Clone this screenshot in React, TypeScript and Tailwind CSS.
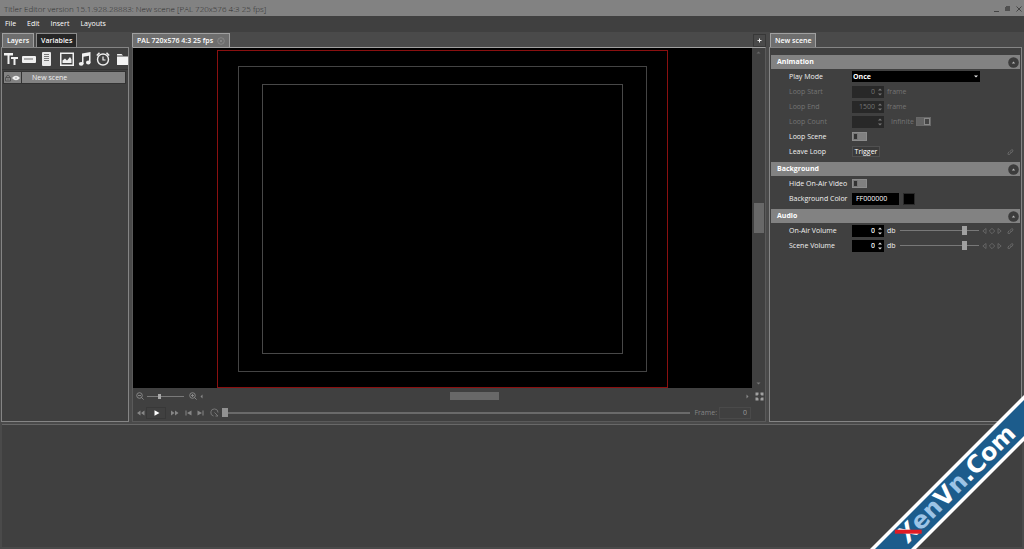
import { useState, type ReactNode } from 'react';

const MENU = ['File', 'Edit', 'Insert', 'Layouts'];

const TOOLS: { name: string; width: string; icon: ReactNode }[] = [
  {
    name: 'Text',
    width: 'w-[18px]',
    icon: (
      <svg width="14" height="14" viewBox="0 0 14 14" fill="#f0f0f0">
        <path d="M0 1h9v2.500H5.500V12H3.500V3.500H0z" />
        <path d="M7 5h7v2h-2.500v6H9.500V7H7z" />
      </svg>
    ),
  },
  {
    name: 'Text line',
    width: 'w-[18px]',
    icon: (
      <svg width="14" height="14" viewBox="0 0 14 14">
        <rect x="0" y="4" width="14" height="7" rx="1" fill="#f0f0f0" />
        <path d="M2 7h9" stroke="#888" strokeWidth="1.300" />
      </svg>
    ),
  },
  {
    name: 'Text page',
    width: 'w-[20px]',
    icon: (
      <svg width="14" height="14" viewBox="0 0 14 14">
        <rect x="2" y="0" width="9" height="14" rx="1" fill="#e8e8e8" />
        <path d="M4 2.500h5M4 4.500h5M4 6.500h5M4 8.500h5" stroke="#777" strokeWidth="1" />
      </svg>
    ),
  },
  {
    name: 'Image',
    width: 'w-[18px]',
    icon: (
      <svg width="14" height="14" viewBox="0 0 14 14">
        <rect x="0.750" y="1.250" width="12.500" height="12" fill="#444" stroke="#f0f0f0" strokeWidth="1.500" />
        <path d="M2.500 11V8.500L5 6.500l2 2L10 5l1.500 2.500V11z" fill="#f0f0f0" />
      </svg>
    ),
  },
  {
    name: 'Audio',
    width: 'w-[18px]',
    icon: (
      <svg width="14" height="14" viewBox="0 0 14 14" fill="#f0f0f0">
        <path d="M4 1.500L12.500 0v10.500h-1.500V3.800L5.500 4.800V12H4z" />
        <ellipse cx="3.200" cy="11.800" rx="2.400" ry="1.900" />
        <ellipse cx="10.300" cy="10.500" rx="2.300" ry="1.900" />
      </svg>
    ),
  },
  {
    name: 'Clock',
    width: 'w-[21px]',
    icon: (
      <svg width="14" height="14" viewBox="0 0 14 14" fill="none" stroke="#f0f0f0">
        <circle cx="7" cy="7.500" r="5.500" strokeWidth="1.400" />
        <path d="M7 4.500v3.500h2.500" strokeWidth="1.200" />
        <path d="M.8 3.500L3.500 .8M13.200 3.500L10.500 .8" strokeWidth="1.500" />
      </svg>
    ),
  },
  {
    name: 'Folder',
    width: 'w-[14px]',
    icon: (
      <svg width="14" height="14" viewBox="0 0 14 14" fill="#f4f4f4">
        <path d="M0 3.500V2.500Q0 2 .5 2H4.500L6 3.500z" />
        <path d="M0 4.500h14V13H.5Q0 13 0 12.500z" />
      </svg>
    ),
  },
];

function Tab({ label, active, closable }: { label: string; active?: boolean; closable?: boolean }) {
  return (
    <button
      className={`flex h-[14px] items-center gap-1 whitespace-nowrap border border-b-0 px-1 font-semibold text-white ${
        active ? 'border-[#a0a0a0] bg-[#6e6e6e]' : 'border-[#8c8c8c] bg-[#262626]'
      }`}
    >
      {label}
      {closable && (
        <svg width="8" height="8" viewBox="0 0 8 8" fill="none" stroke="#929292" strokeWidth="0.700">
          <circle cx="4" cy="4" r="3.300" />
          <path d="M2.800 2.800l2.400 2.400M5.200 2.800L2.800 5.200" />
        </svg>
      )}
    </button>
  );
}

function Section({ title, children }: { title: string; children: ReactNode }) {
  const [open, setOpen] = useState(true);
  return (
    <section className="pb-[3px]">
      <h2 className="flex h-[14px] items-center justify-between bg-[#828282] pl-[6px] pr-px font-bold text-white">
        {title}
        <button aria-label={`Toggle ${title}`} onClick={() => setOpen(!open)}>
          <svg width="11" height="11" viewBox="0 0 11 11">
            <circle cx="5.500" cy="5.500" r="5.300" fill="#3c3c3c" />
            <path d="M3.800 6.400L5.500 4.600l1.700 1.800z" fill="#b5b5b5" />
          </svg>
        </button>
      </h2>
      {open && children}
    </section>
  );
}

function Row({ id, label, dim, children }: { id: string; label: string; dim?: boolean; children: ReactNode }) {
  return (
    <div className={`flex h-[15px] items-center pl-[18px] pr-[6px] ${dim ? 'text-[#747474]' : 'text-[#f0f0f0]'}`}>
      <label htmlFor={id} className="w-[63px] shrink-0 whitespace-nowrap">
        {label}
      </label>
      {children}
    </div>
  );
}

function Spin({ id, value, dim }: { id: string; value: string; dim?: boolean }) {
  return (
    <div className={`flex h-[12px] w-[32px] shrink-0 items-center ${dim ? 'bg-[#282828]' : 'bg-black font-semibold'}`}>
      <input id={id} defaultValue={value} disabled={dim} className="w-0 flex-1 bg-transparent text-right outline-none" />
      <svg width="9" height="10" viewBox="0 0 9 10" fill={dim ? '#777' : '#ddd'}>
        <path d="M3 3.500L5 1.500l2 2zM3 6.500L5 8.500l2-2z" />
      </svg>
    </div>
  );
}

function Toggle({ id }: { id: string }) {
  return (
    <input
      id={id}
      type="checkbox"
      className="h-[9px] w-[15px] shrink-0 appearance-none border border-[#8c8c8c] bg-[#808080] before:block before:h-[7px] before:w-[5px] before:border before:border-[#777] before:bg-[#333] checked:before:ml-2"
    />
  );
}

function LinkIcon() {
  return (
    <svg width="7" height="8" viewBox="0 0 7 8" fill="none" stroke="#6d6d6d" strokeWidth="0.900">
      <path d="M3 3.500l1.800-2 1.300 1-1.800 2.500zM1.800 3.800L.8 6l1 1 2-2" />
    </svg>
  );
}

function VolumeRow({ id, label }: { id: string; label: string }) {
  return (
    <Row id={id} label={label}>
      <Spin id={id} value="0" />
      <span className="ml-[3px] w-[13px] shrink-0">db</span>
      <input
        type="range"
        aria-label={`${label} level`}
        defaultValue={84}
        className="h-[10px] w-[79px] appearance-none bg-transparent [&::-webkit-slider-runnable-track]:h-px [&::-webkit-slider-runnable-track]:bg-[#787878] [&::-webkit-slider-thumb]:-mt-[4px] [&::-webkit-slider-thumb]:h-[9px] [&::-webkit-slider-thumb]:w-[5px] [&::-webkit-slider-thumb]:appearance-none [&::-webkit-slider-thumb]:bg-[#a0a0a0]"
      />
      <svg className="ml-[3px] shrink-0" width="20" height="8" viewBox="0 0 20 8" fill="none" stroke="#6d6d6d" strokeWidth="0.800">
        <path d="M4 1.500L.8 4 4 6.500zM16 1.500L19.200 4 16 6.500z" />
        <path d="M10 1.300L12.700 4 10 6.700 7.300 4z" />
      </svg>
      <span className="ml-auto">
        <LinkIcon />
      </span>
    </Row>
  );
}

function TransportIcon({ d, active }: { d: string; active?: boolean }) {
  return (
    <svg width="9" height="8" viewBox="0 0 9 8" fill={active ? '#fff' : '#868686'}>
      <path d={d} />
    </svg>
  );
}

function ZoomIcon({ plus }: { plus?: boolean }) {
  return (
    <svg width="8" height="8" viewBox="0 0 8 8" fill="none" stroke="#8c8c8c" strokeWidth="0.900">
      <circle cx="3.500" cy="3.500" r="2.800" />
      <path d={plus ? 'M2 3.500h3M3.500 2v3M5.500 5.500L7.600 7.600' : 'M2 3.500h3M5.500 5.500L7.600 7.600'} />
    </svg>
  );
}

function LayersPanel() {
  return (
    <aside className="flex w-[129px] shrink-0 flex-col pl-px">
      <div className="flex gap-[2px] pl-px">
        <Tab label="Layers" active />
        <Tab label="Variables" />
      </div>
      <div className="flex-1 overflow-hidden border border-[#858585] bg-[#404040]">
        <div className="flex h-[22px] items-center overflow-hidden border-b border-[#333] pl-[2px]">
          {TOOLS.map((tool) => (
            <button key={tool.name} title={tool.name} className={`${tool.width} shrink-0`}>
              {tool.icon}
            </button>
          ))}
        </div>
        <div className="ml-px mr-[2px] mt-px flex h-[13px] items-center border border-[#333] bg-[#828282] text-[#f0f0f0]">
          <span className="flex h-full w-[18px] items-center border-r border-[#333]">
            <svg width="8" height="8" viewBox="0 0 8 8" fill="none" stroke="#4a4a4a" strokeWidth="0.800">
              <path d="M1.500 3.500h5V7h-5zM2.500 3.500V2.200Q4 0 5.500 2.200v1.300M3.500 5.200h1" />
            </svg>
            <svg width="8" height="8" viewBox="0 0 8 8">
              <path d="M0 4Q4-.5 8 4 4 8.500 0 4z" fill="#eee" />
              <circle cx="4" cy="4" r="1" fill="#bbb" />
            </svg>
          </span>
          <span className="pl-[10px]">New scene</span>
        </div>
      </div>
    </aside>
  );
}

function Preview() {
  return (
    <main className="flex min-w-0 flex-1 flex-col">
      <div className="flex items-center justify-between">
        <Tab label="PAL 720x576 4:3 25 fps" active closable />
        <button aria-label="Add tab" className="flex h-[13px] w-[13px] items-center justify-center border border-[#383838] text-white">
          <svg width="5" height="5" viewBox="0 0 5 5" stroke="#eee">
            <path d="M2.500 .5v4M.5 2.500h4" />
          </svg>
        </button>
      </div>
      <div className="flex flex-1 flex-col border border-[#5a5a5a] border-t-[#a0a0a0] bg-[#404040]">
        <div className="flex flex-1">
          <div className="flex flex-1 items-center justify-center bg-black pt-[2px]">
            <div className="flex aspect-[4/3] h-full items-center justify-center border border-[#8a1010]">
              <div className="flex h-[91%] w-[91%] items-center justify-center border border-[#444]">
                <div className="h-[89%] w-[89%] border border-[#484848]" />
              </div>
            </div>
          </div>
          <div className="flex w-[13px] flex-col items-center justify-between py-[3px]">
            <svg width="5" height="3" viewBox="0 0 5 3" fill="#666">
              <path d="M.5 2.500L2.500 .5l2 2z" />
            </svg>
            <div className="h-[30px] w-[10px] bg-[#686868]" />
            <svg width="5" height="3" viewBox="0 0 5 3" fill="#777">
              <path d="M.5 .5L2.500 2.500l2-2z" />
            </svg>
          </div>
        </div>
        <div className="flex h-[16px] items-center pl-[3px] pr-px">
          <ZoomIcon />
          <input
            type="range"
            aria-label="Zoom"
            defaultValue={33}
            className="ml-[3px] h-[8px] w-[37px] appearance-none bg-transparent [&::-webkit-slider-runnable-track]:h-px [&::-webkit-slider-runnable-track]:bg-[#7a7a7a] [&::-webkit-slider-thumb]:-mt-[2px] [&::-webkit-slider-thumb]:h-[5px] [&::-webkit-slider-thumb]:w-[3px] [&::-webkit-slider-thumb]:appearance-none [&::-webkit-slider-thumb]:bg-[#a8a8a8]"
          />
          <span className="ml-[5px]">
            <ZoomIcon plus />
          </span>
          <div className="ml-[3px] mr-[6px] flex flex-1 items-center justify-between">
            <svg width="3" height="5" viewBox="0 0 3 5" fill="#888">
              <path d="M2.500 .5L.5 2.500l2 2z" />
            </svg>
            <div className="h-[8px] w-[49px] bg-[#686868]" />
            <svg width="3" height="5" viewBox="0 0 3 5" fill="#888">
              <path d="M.5 .5l2 2-2 2z" />
            </svg>
          </div>
          <button aria-label="Fit to window">
            <svg width="9" height="9" viewBox="0 0 9 9" fill="#a0a0a0">
              <path d="M.5 .5h3v2l-1 1h-2zM8.500 .5v3h-2l-1-1v-2zM.5 8.500v-3h2l1 1v2zM8.500 8.500h-3v-2l1-1h2z" />
            </svg>
          </button>
        </div>
        <div className="flex h-[17px] items-center pl-[3px] pr-[14px]">
          <button aria-label="Rewind">
            <TransportIcon d="M4.500 1.500v5L1 4zM8.500 1.500v5L5 4z" />
          </button>
          <button aria-label="Play" className="mx-px flex h-[12px] w-[20px] items-center justify-center border border-[#383838]">
            <TransportIcon d="M2.500 1.200L7.500 4l-5 2.800z" active />
          </button>
          <button aria-label="Fast forward" className="ml-[3px]">
            <TransportIcon d="M1 1.500v5L4.500 4zM5 1.500v5L8.500 4z" />
          </button>
          <button aria-label="To start" className="ml-[5px]">
            <TransportIcon d="M1.500 1.500h1v5h-1zM7.500 1.500v5L3 4z" />
          </button>
          <button aria-label="To end" className="ml-[3px]">
            <TransportIcon d="M1.500 1.500v5L6 4zM6.500 1.500h1v5h-1z" />
          </button>
          <button aria-label="Loop" className="ml-[5px]">
            <svg width="9" height="9" viewBox="0 0 9 9" fill="none" stroke="#7c7c7c" strokeWidth="0.900">
              <path d="M3.500 8A3.600 3.600 0 1 1 8 4.500M4.500 4.500l3.500 3.500M5.500 8H8" />
            </svg>
          </button>
          <input
            type="range"
            aria-label="Timeline"
            defaultValue={0}
            className="ml-[3px] h-[10px] min-w-0 flex-1 appearance-none bg-transparent [&::-webkit-slider-runnable-track]:h-[2px] [&::-webkit-slider-runnable-track]:bg-[#6a6a6a] [&::-webkit-slider-thumb]:-mt-[4px] [&::-webkit-slider-thumb]:h-[9px] [&::-webkit-slider-thumb]:w-[6px] [&::-webkit-slider-thumb]:appearance-none [&::-webkit-slider-thumb]:bg-[#929292]"
          />
          <label htmlFor="frame" className="ml-[4px] text-[#858585]">
            Frame:
          </label>
          <input
            id="frame"
            defaultValue="0"
            className="ml-[2px] h-[12px] w-[32px] border border-[#4a4a4a] bg-transparent pr-[3px] text-right text-[#999]"
          />
        </div>
      </div>
    </main>
  );
}

function Inspector() {
  return (
    <aside className="flex w-[253px] shrink-0 flex-col">
      <div className="flex pl-px">
        <Tab label="New scene" active />
      </div>
      <div className="flex-1 border border-[#858585] bg-[#404040] px-px pt-[7px]">
        <Section title="Animation">
          <Row id="play-mode" label="Play Mode">
            <div className="grid w-[128px] items-center">
              <select
                id="play-mode"
                className="col-start-1 row-start-1 h-[11px] w-full appearance-none bg-black pl-px font-bold text-white"
              >
                <option>Once</option>
                <option>Loop</option>
              </select>
              <svg className="pointer-events-none col-start-1 row-start-1 mr-[2px] justify-self-end" width="4" height="3" viewBox="0 0 4 3" fill="#eee">
                <path d="M0 .5h4L2 2.500z" />
              </svg>
            </div>
          </Row>
          <Row id="loop-start" label="Loop Start" dim>
            <Spin id="loop-start" value="0" dim />
            <span className="ml-[3px]">frame</span>
          </Row>
          <Row id="loop-end" label="Loop End" dim>
            <Spin id="loop-end" value="1500" dim />
            <span className="ml-[3px]">frame</span>
          </Row>
          <Row id="loop-count" label="Loop Count" dim>
            <Spin id="loop-count" value="" dim />
            <label htmlFor="infinite" className="ml-[7px]">
              Infinite
            </label>
            <input
              id="infinite"
              type="checkbox"
              disabled
              defaultChecked
              className="ml-[2px] flex h-[9px] w-[15px] appearance-none justify-end border border-[#686868] bg-[#646464] before:h-[7px] before:w-[6px] before:border before:border-[#888] before:bg-[#444]"
            />
          </Row>
          <Row id="loop-scene" label="Loop Scene">
            <Toggle id="loop-scene" />
          </Row>
          <Row id="leave-loop" label="Leave Loop">
            <button id="leave-loop" className="h-[11px] w-[28px] border border-[#505050] bg-[#3a3a3a] leading-[9px] text-white">
              Trigger
            </button>
            <span className="ml-auto">
              <LinkIcon />
            </span>
          </Row>
        </Section>
        <Section title="Background">
          <Row id="hide-video" label="Hide On-Air Video">
            <Toggle id="hide-video" />
          </Row>
          <Row id="bg-color" label="Background Color">
            <input id="bg-color" defaultValue="FF000000" className="h-[12px] w-[47px] bg-black pl-[4px] text-white" />
            <button aria-label="Pick color" className="ml-[4px] h-[12px] w-[12px] border border-[#2a2a2a] bg-black" />
          </Row>
        </Section>
        <Section title="Audio">
          <VolumeRow id="on-air-volume" label="On-Air Volume" />
          <VolumeRow id="scene-volume" label="Scene Volume" />
        </Section>
      </div>
    </aside>
  );
}

function Ribbon() {
  return (
    <svg className="pointer-events-none absolute bottom-0 right-0" width="160" height="160" viewBox="0 0 160 160">
      <path d="M0 166L166 0V46L46 166z" fill="#fff" />
      <path d="M5 166L166 5V41L41 166z" fill="#1c5c8c" />
      <g transform="translate(45 154) rotate(-45)" fontFamily="'DejaVu Sans', sans-serif" fontSize="24" fontWeight="700">
        <text x="-2" y="0" fill="#fff">
          X
          <tspan fill="#9cc4e6">en</tspan>
          V
          <tspan fill="#9cc4e6">n</tspan>
          .Com
        </text>
        <path d="M-2 -18L17 1" stroke="#e01b24" strokeWidth="4" />
      </g>
    </svg>
  );
}

export default function App() {
  return (
    <div className="relative flex min-h-screen flex-col overflow-hidden bg-[#4a4a4a] font-['Open_Sans','Noto_Sans',sans-serif] text-[7px] leading-[10px]">
      <header className="flex h-[16px] items-center justify-between bg-[#828282] pl-1 pr-[2px] pt-px">
        <h1 className="text-[8px] font-light text-[#2e2e2e]">
          Titler Editor version 15.1.928.28883: New scene [PAL 720x576 4:3 25 fps]
        </h1>
        <div className="flex gap-[5px]">
          <button aria-label="Minimize">
            <svg width="6" height="6" viewBox="0 0 6 6" stroke="#444">
              <path d="M0 5.500h5" />
            </svg>
          </button>
          <button aria-label="Restore">
            <svg width="6" height="6" viewBox="0 0 6 6">
              <path d="M1 0h4v5H0V1h1z" fill="#505050" />
            </svg>
          </button>
          <button aria-label="Close">
            <svg width="6" height="6" viewBox="0 0 6 6" stroke="#444">
              <path d="M.5 .5l5 5M5.500 .5l-5 5" />
            </svg>
          </button>
        </div>
      </header>
      <nav className="flex h-[16px] items-center gap-[11px] bg-[#404040] pl-[5px] text-white">
        {MENU.map((item) => (
          <button key={item}>{item}</button>
        ))}
      </nav>
      <div className="flex flex-1 gap-[3px] pb-[2px] pr-[2px] pt-px">
        <LayersPanel />
        <Preview />
        <Inspector />
      </div>
      <footer className="mx-[2px] mb-[2px] h-[123px] border-t border-[#686868] bg-[#404040]" />
      <Ribbon />
    </div>
  );
}
